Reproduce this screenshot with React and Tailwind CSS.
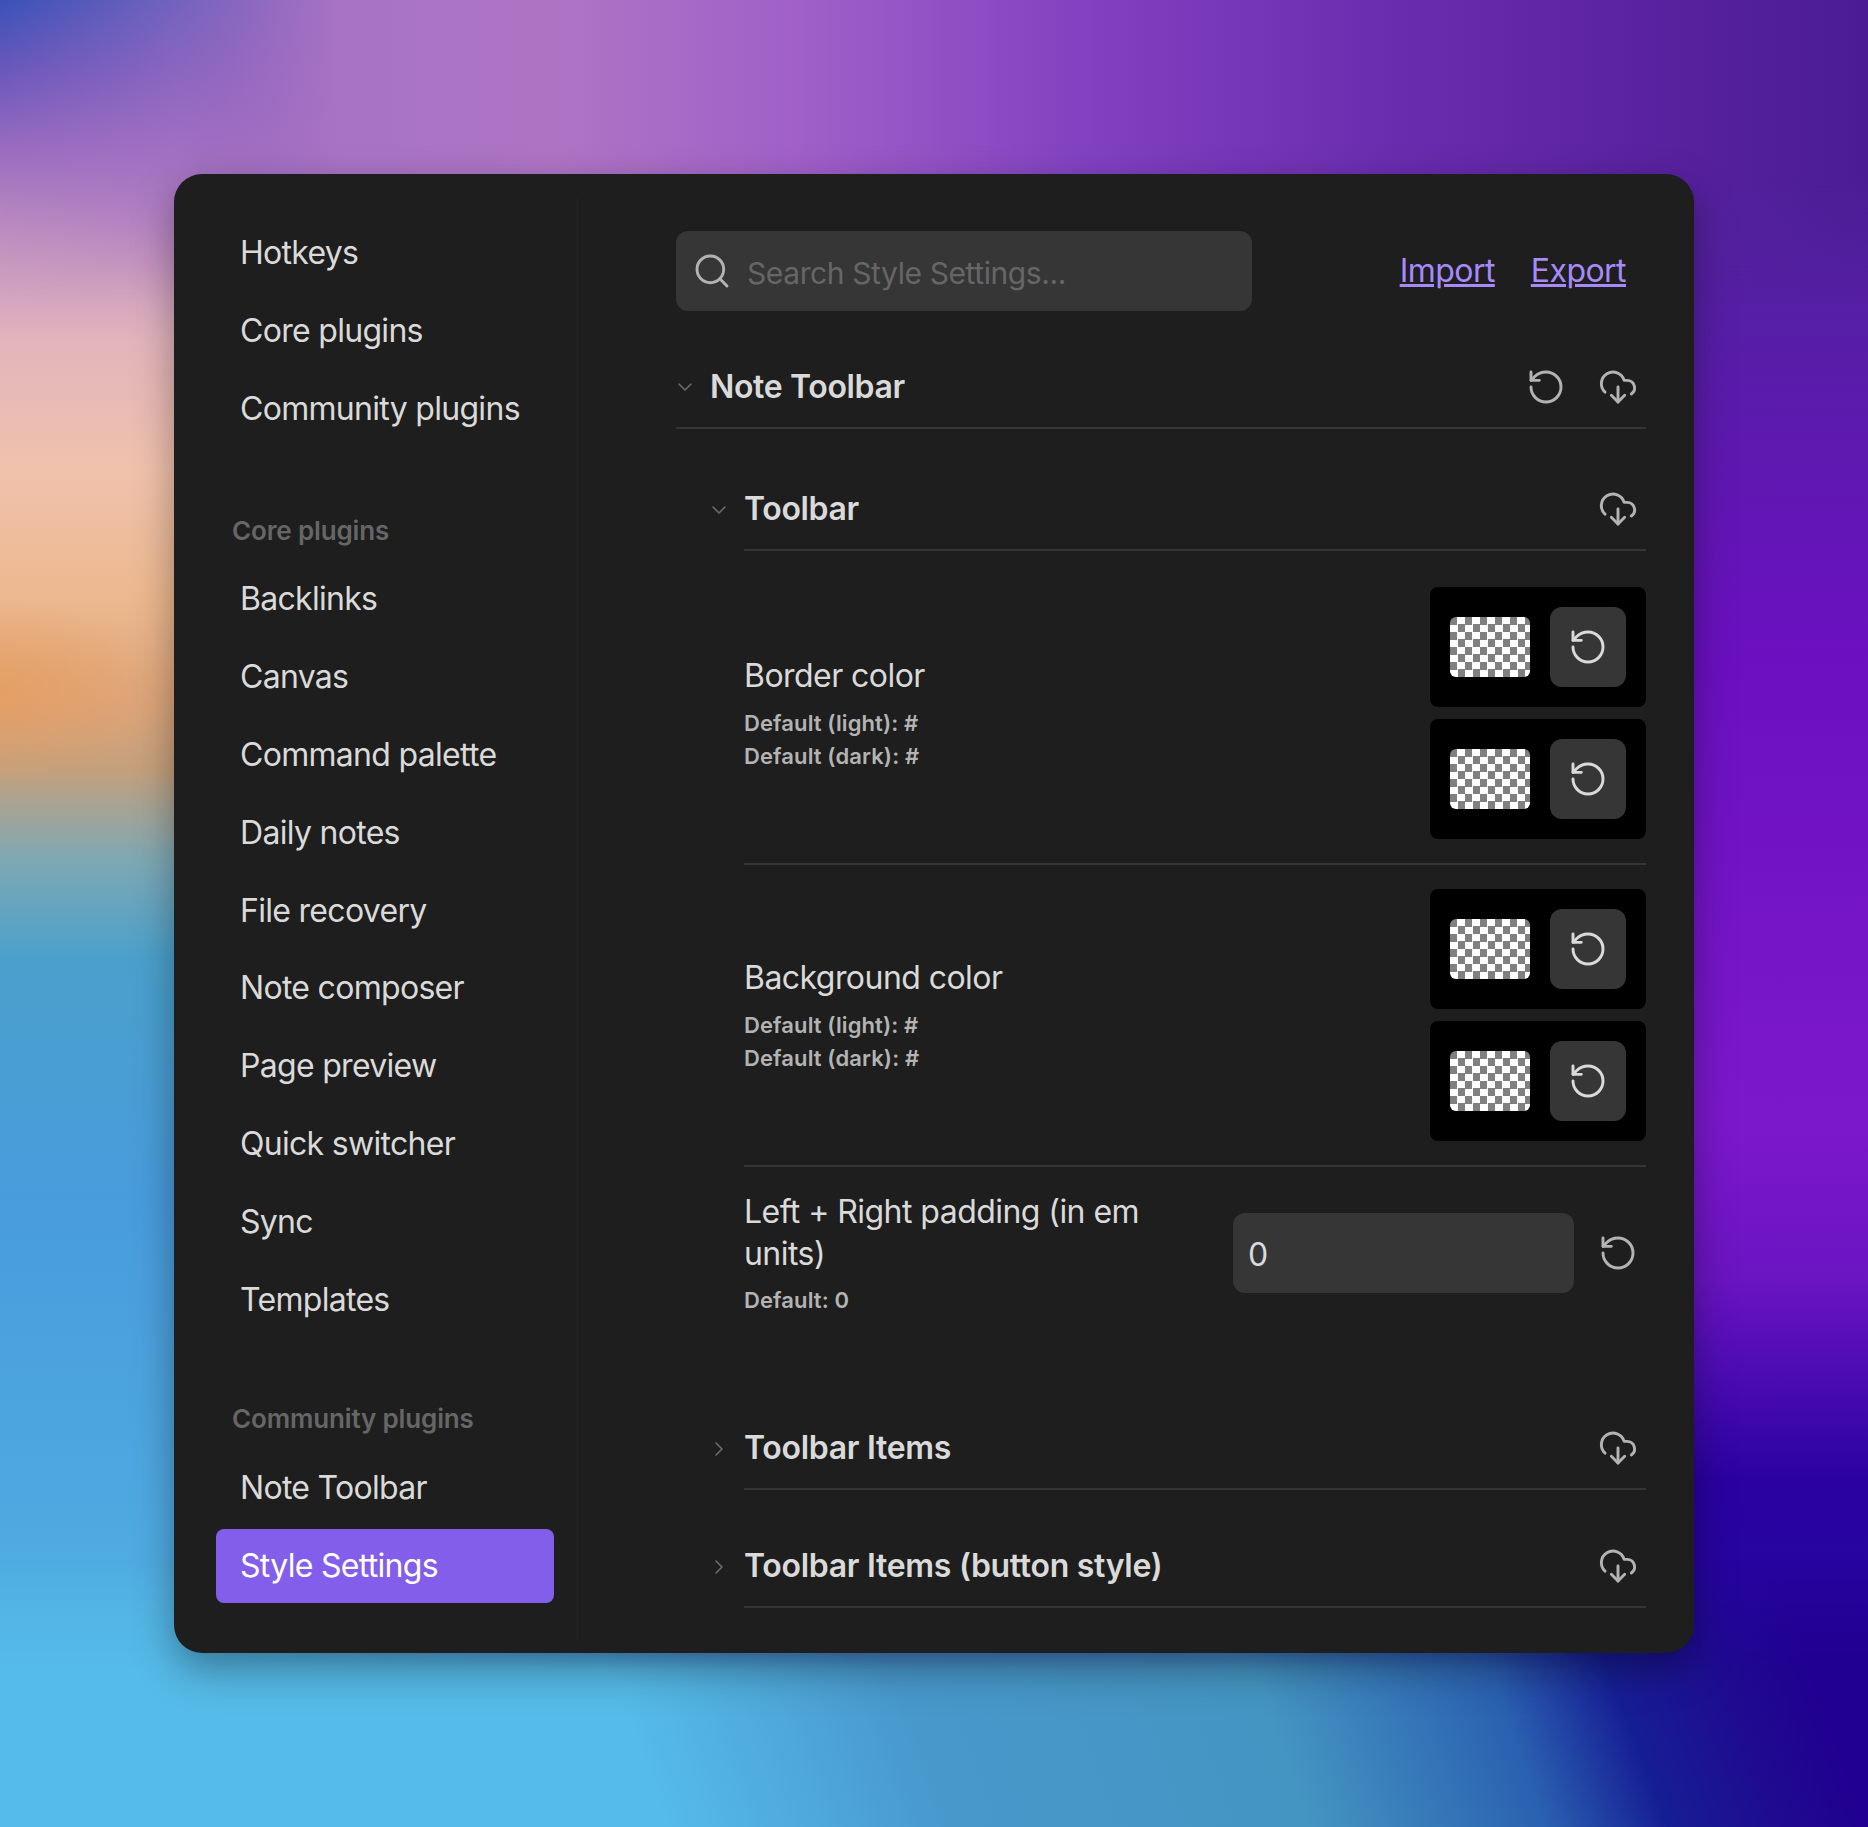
import React from "react";

const Reset = ({ className = "" }) => (
  <svg viewBox="0 0 24 24" fill="none" stroke="currentColor" strokeWidth="1.75" strokeLinecap="round" strokeLinejoin="round" className={`w-10 h-10 shrink-0 ${className}`}>
    <path d="M3 12a9 9 0 1 0 9-9 9.75 9.75 0 0 0-6.74 2.74L3 8" />
    <path d="M3 3v5h5" />
  </svg>
);

const Cloud = () => (
  <svg viewBox="0 0 24 24" fill="none" stroke="currentColor" strokeWidth="1.75" strokeLinecap="round" strokeLinejoin="round" className="w-10 h-10 shrink-0 text-[#b3b3b3]">
    <path d="M4.2 15.1A7 7 0 1 1 15.71 8h1.79a4.5 4.5 0 0 1 2.5 8.2" />
    <path d="M12 12v9" />
    <path d="m8 17 4 4 4-4" />
  </svg>
);

const ChevronDown = ({ className = "" }) => (
  <svg viewBox="0 0 24 24" fill="none" stroke="#6e6e6e" strokeWidth="1.5" strokeLinecap="round" strokeLinejoin="round" className={`w-6 h-6 shrink-0 ${className}`}>
    <path d="m6 9 6 6 6-6" />
  </svg>
);

const ChevronRight = ({ className = "" }) => (
  <svg viewBox="0 0 24 24" fill="none" stroke="#6e6e6e" strokeWidth="1.5" strokeLinecap="round" strokeLinejoin="round" className={`w-6 h-6 shrink-0 ${className}`}>
    <path d="m9 18 6-6-6-6" />
  </svg>
);

const NavItem = ({ children, active }) => (
  <div className={`h-[74px] mb-[3.8px] flex items-center px-[24px] rounded-lg text-[32px] tracking-[-0.7px] whitespace-nowrap ${active ? "bg-[#835eeb] text-white" : "text-[#dadada]"}`}>
    {children}
  </div>
);

const NavHeading = ({ children, className = "" }) => (
  <div className={`mb-[15px] h-[34px] flex items-center pl-[16px] text-[26px] font-semibold tracking-[-0.15px] text-[#666666] ${className}`}>{children}</div>
);

const ColorControl = () => (
  <div className="w-[216px] h-[120px] bg-black rounded-lg flex items-center justify-between pl-5 pr-5">
    <div className="w-20 h-[60px] rounded-md bg-[repeating-conic-gradient(#ffffff_0_25%,#808080_0_50%)] bg-[length:15px_15px]" />
    <div className="w-[76px] h-20 rounded-xl bg-[#363636] flex items-center justify-center text-[#dadada] shadow-[0_1px_2px_rgba(0,0,0,0.3)]">
      <Reset />
    </div>
  </div>
);

const ColorSetting = ({ name, first }) => (
  <div className={`flex items-center justify-between py-6 border-b-2 border-[#363636] ${first ? "mt-3" : ""}`}>
    <div className="pt-[2px]">
      <div className="text-[32px] leading-[42px] text-[#dadada]">{name}</div>
      <div className="mt-[10px] text-[22px] leading-[33px] font-semibold tracking-[0.1px] text-[#b3b3b3]">
        <div>Default (light): #</div>
        <div>Default (dark): #</div>
      </div>
    </div>
    <div className="flex flex-col gap-3">
      <ColorControl />
      <ColorControl />
    </div>
  </div>
);

const CollapsedRow = ({ title }) => (
  <div className="flex items-center pl-[31px]">
    <ChevronRight className="mr-[13px]" />
    <div className="flex-1 h-[82px] border-b-2 border-[#363636] flex items-center justify-between pr-2">
      <span className="text-[32px] font-semibold tracking-[-0.3px] text-[#dadada]">{title}</span>
      <Cloud />
    </div>
  </div>
);

export default function App() {
  return (
    <div className="relative w-full h-[1827px] overflow-hidden font-['Inter',sans-serif] antialiased tracking-[-0.55px] bg-[linear-gradient(to_bottom,#4c2a98_0px,#551fa4_300px,#6a10c0_650px,#7c18cc_1120px,#6a14c2_1280px,#2a02a2_1480px,#1e0a98_1827px)] pt-[174px] pl-[174px]">
      <div className="absolute inset-0 bg-[linear-gradient(to_bottom,#3a52b8_0px,#6a58bc_70px,#9a6cc0_150px,#c090c0_240px,#e2b4bc_340px,#f0c2ac_470px,#ecb88e_600px,#dca67e_700px,#c4a07c_770px,#7ea8b4_860px,#4aa0cc_960px,#489cdc_1200px,#4ea8e0_1500px,#55bbe8_1827px)] [mask-image:linear-gradient(to_right,black_0,black_176px,transparent_640px)]" />
      <div className="absolute inset-0 bg-[radial-gradient(ellipse_180px_90px_at_0px_690px,rgba(232,156,90,0.75),rgba(232,156,90,0))]" />
      <div className="absolute inset-0 bg-[linear-gradient(to_right,rgba(168,115,196,0)_0px,#a873c4_340px,#ae74c4_560px,#a060c8_800px,#8040c0_1100px,#6a2cae_1400px,#5a22a0_1640px,#4a1c94_1868px)] [mask-image:linear-gradient(to_bottom,black_0,black_174px,transparent_300px)]" />
      <div className="absolute inset-0 bg-[linear-gradient(70deg,#55bbe8_0px,#55bbe8_626px,#4898cc_893px,#4495c2_1231px,#2a60b0_1454px,#161e94_1566px,#1f0a90_1678px,#200090_1756px)] [mask-image:linear-gradient(to_bottom,transparent_1560px,black_1670px)]" />

      <div className="relative w-[1520px] h-[1479px] rounded-[28px] bg-[#1e1e1e] flex shadow-[0_16px_40px_rgba(0,0,0,0.35)]">
        <aside className="w-[404px] h-[1445px] mt-[23px] pl-[42px] pr-[23px] pt-[19px] shrink-0 border-r border-[#232323]">
          <NavItem>Hotkeys</NavItem>
          <NavItem>Core plugins</NavItem>
          <NavItem>Community plugins</NavItem>
          <NavHeading className="mt-[67.8px]">Core plugins</NavHeading>
          <NavItem>Backlinks</NavItem>
          <NavItem>Canvas</NavItem>
          <NavItem>Command palette</NavItem>
          <NavItem>Daily notes</NavItem>
          <NavItem>File recovery</NavItem>
          <NavItem>Note composer</NavItem>
          <NavItem>Page preview</NavItem>
          <NavItem>Quick switcher</NavItem>
          <NavItem>Sync</NavItem>
          <NavItem>Templates</NavItem>
          <NavHeading className="mt-[65.4px]">Community plugins</NavHeading>
          <NavItem>Note Toolbar</NavItem>
          <NavItem active>Style Settings</NavItem>
        </aside>

        <main className="flex-1 pl-[98px] pr-[48px] pt-[57px]">
          <div className="flex items-center justify-between h-20 pr-5">
            <div className="w-[576px] h-20 rounded-xl bg-[#363636] flex items-center pl-4 gap-[15px]">
              <svg viewBox="0 0 24 24" fill="none" stroke="#b3b3b3" strokeWidth="1.75" strokeLinecap="round" strokeLinejoin="round" className="w-10 h-10 shrink-0">
                <circle cx="11" cy="11" r="8" />
                <path d="m21 21-4.3-4.3" />
              </svg>
              <span className="pt-1 text-[30px] tracking-[-0.4px] text-[#666666]">Search Style Settings...</span>
            </div>
            <div className="flex gap-9 text-[32px] text-[#a68af9] underline">
              <span>Import</span>
              <span>Export</span>
            </div>
          </div>

          <div className="mt-9 h-[82px] border-b-2 border-[#363636] flex items-center pr-2">
            <ChevronDown className="-ml-[3px] mr-[13px]" />
            <span className="text-[32px] font-semibold tracking-[-0.35px] text-[#dadada]">Note Toolbar</span>
            <div className="ml-auto flex items-center gap-8 text-[#b3b3b3]">
              <Reset />
              <Cloud />
            </div>
          </div>

          <div className="mt-10 flex items-center pl-[31px]">
            <ChevronDown className="mr-[13px]" />
            <div className="flex-1 h-[82px] border-b-2 border-[#363636] flex items-center justify-between pr-2">
              <span className="text-[32px] font-semibold tracking-[-0.35px] text-[#dadada]">Toolbar</span>
              <Cloud />
            </div>
          </div>

          <div className="pl-[68px]">
            <ColorSetting name="Border color" first />
            <ColorSetting name="Background color" />

            <div className="flex items-center justify-between py-6">
              <div className="w-[440px]">
                <div className="text-[32px] leading-[41.6px] text-[#dadada]">Left + Right padding (in em units)</div>
                <div className="mt-[10px] text-[22px] leading-[33px] font-semibold tracking-[0.1px] text-[#b3b3b3]">Default: 0</div>
              </div>
              <div className="flex items-center pr-2 -mt-[2px]">
                <div className="w-[341px] h-20 rounded-xl bg-[#363636] flex items-center pl-[15px] pt-1 text-[32px] text-[#dadada]">0</div>
                <Reset className="ml-6 text-[#b3b3b3]" />
              </div>
            </div>
          </div>

          <div className="mt-[67px]">
            <CollapsedRow title="Toolbar Items" />
          </div>
          <div className="mt-9">
            <CollapsedRow title="Toolbar Items (button style)" />
          </div>
        </main>
      </div>
    </div>
  );
}
